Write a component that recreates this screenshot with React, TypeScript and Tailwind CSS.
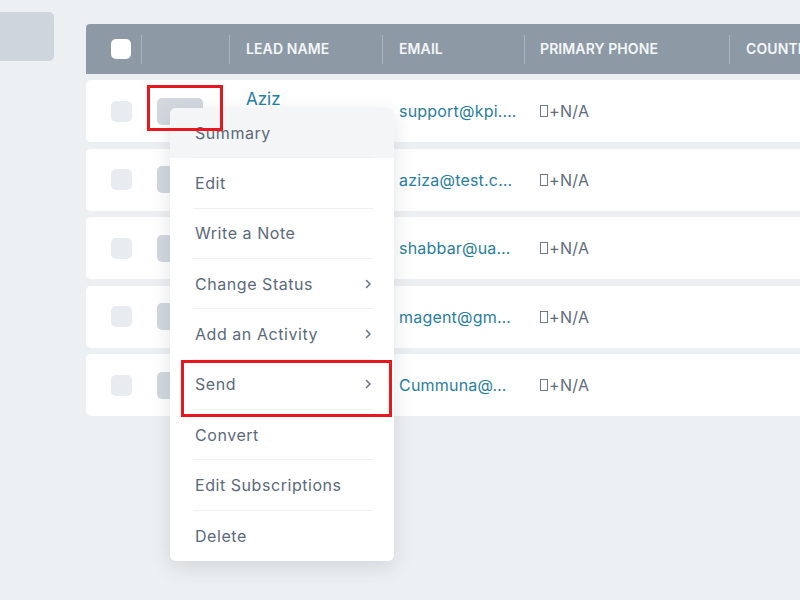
import React from "react";

const font = { fontFamily: "Inter, 'Noto Sans', sans-serif" };

const rows = [
  { name: "Aziz", email: "support@kpi.…" },
  { name: "Aziza", email: "aziza@test.c…" },
  { name: "Shabbar", email: "shabbar@ua…" },
  { name: "Magent", email: "magent@gm…" },
  { name: "Cummuna", email: "Cummuna@…" },
];

const menu = [
  { label: "Summary", sub: false },
  { label: "Edit", sub: false },
  { label: "Write a Note", sub: false },
  { label: "Change Status", sub: true },
  { label: "Add an Activity", sub: true },
  { label: "Send", sub: true },
  { label: "Convert", sub: false },
  { label: "Edit Subscriptions", sub: false },
  { label: "Delete", sub: false },
];

function Chevron() {
  return (
    <svg width="7" height="10" viewBox="0 0 7 10" className="shrink-0">
      <path d="M1.5 1.5 L5 5 L1.5 8.5" fill="none" stroke="#6b7785" strokeWidth="1.6" strokeLinecap="round" strokeLinejoin="round" />
    </svg>
  );
}

function Phone() {
  return (
    <div className="flex items-center text-[16px] text-[#5f6c79] tracking-[0.3px]">
      <span className="inline-block w-[8px] h-[12px] border border-[#6f7b87] mr-[1px]" />
      <span>+N/A</span>
    </div>
  );
}

export default function App() {
  return (
    <div className="relative w-[800px] h-[600px] overflow-hidden bg-[#edf0f3] flex" style={font}>
      {/* left sidebar stub */}
      <div className="w-[54px] shrink-0 pt-[12px]">
        <div className="h-[49px] bg-[#ced5dc] rounded-r-[5px]" />
      </div>

      {/* table */}
      <div className="ml-[32px] pt-[24px] flex-1 flex flex-col">
        <div className="h-[50px] bg-[#8d9aa6] rounded-tl-[4px] flex items-center text-[14px] font-semibold text-[#f4f6f8] tracking-[0.1px]">
          <div className="w-[55px] pl-[25px] flex items-center">
            <div className="w-[20px] h-[20px] bg-white rounded-[5px]" />
          </div>
          <div className="w-[88px] h-[29px] border-l border-[#aab5bf]" />
          <div className="w-[153px] h-[29px] border-l border-[#aab5bf] pl-[16px] flex items-center pb-[1px]">LEAD NAME</div>
          <div className="w-[142px] h-[29px] border-l border-[#aab5bf] pl-[16px] flex items-center pb-[1px]">EMAIL</div>
          <div className="w-[205px] h-[29px] border-l border-[#aab5bf] pl-[15px] flex items-center pb-[1px]">PRIMARY PHONE</div>
          <div className="flex-1 h-[29px] border-l border-[#aab5bf] pl-[16px] flex items-center pb-[1px] whitespace-nowrap overflow-hidden">COUNTRY</div>
        </div>

        <div className="mt-[6px] flex flex-col gap-[6.5px]">
          {rows.map((r, i) => (
            <div key={r.email} className="h-[62px] bg-white rounded-l-[5px] flex items-center">
              <div className="w-[55px] pl-[25px] flex items-center">
                <div className="w-[21px] h-[21px] bg-[#e8ecf0] rounded-[5px]" />
              </div>
              <div className="w-[88px] pl-[16px] flex items-center">
                <div className="w-[46px] h-[27px] bg-[#d3d8df] rounded-[5px]" />
              </div>
              <div className="w-[153px] pl-[17px] self-start pt-[7px] text-[17px] text-[#22809f]">{i === 0 ? r.name : ""}</div>
              <div className="w-[142px] pl-[17px] text-[16px] text-[#2a7e9b] whitespace-nowrap tracking-[0.2px]">{r.email}</div>
              <div className="w-[205px] pl-[16px]">
                <Phone />
              </div>
              <div className="flex-1" />
            </div>
          ))}
        </div>
      </div>

      {/* dropdown menu */}
      <div className="absolute left-[170px] top-[108px] w-[224px] bg-white rounded-[6px] shadow-[0_6px_20px_rgba(40,55,70,0.14)]">
        {menu.map((m, i) => (
          <div key={m.label} className={`h-[50.33px] ${i === 0 ? "bg-[#f4f5f7] rounded-t-[6px]" : ""}`}>
            <div className={`h-full ml-[23px] mr-[21px] flex items-center justify-between ${i < menu.length - 1 ? "border-b border-[#eef0f2]" : ""}`}>
              <span className="pl-[2px] text-[16px] text-[#5b6a7a] tracking-[0.55px]">{m.label}</span>
              {m.sub && <span className="pr-[1px]"><Chevron /></span>}
            </div>
          </div>
        ))}
      </div>

      {/* annotation boxes */}
      <div className="absolute left-[147px] top-[85px] w-[76px] h-[46px] border-[3px] border-[#e8161e]" />
      <div className="absolute left-[181px] top-[360px] w-[211px] h-[57px] border-[3px] border-[#e8161e]" />
    </div>
  );
}
